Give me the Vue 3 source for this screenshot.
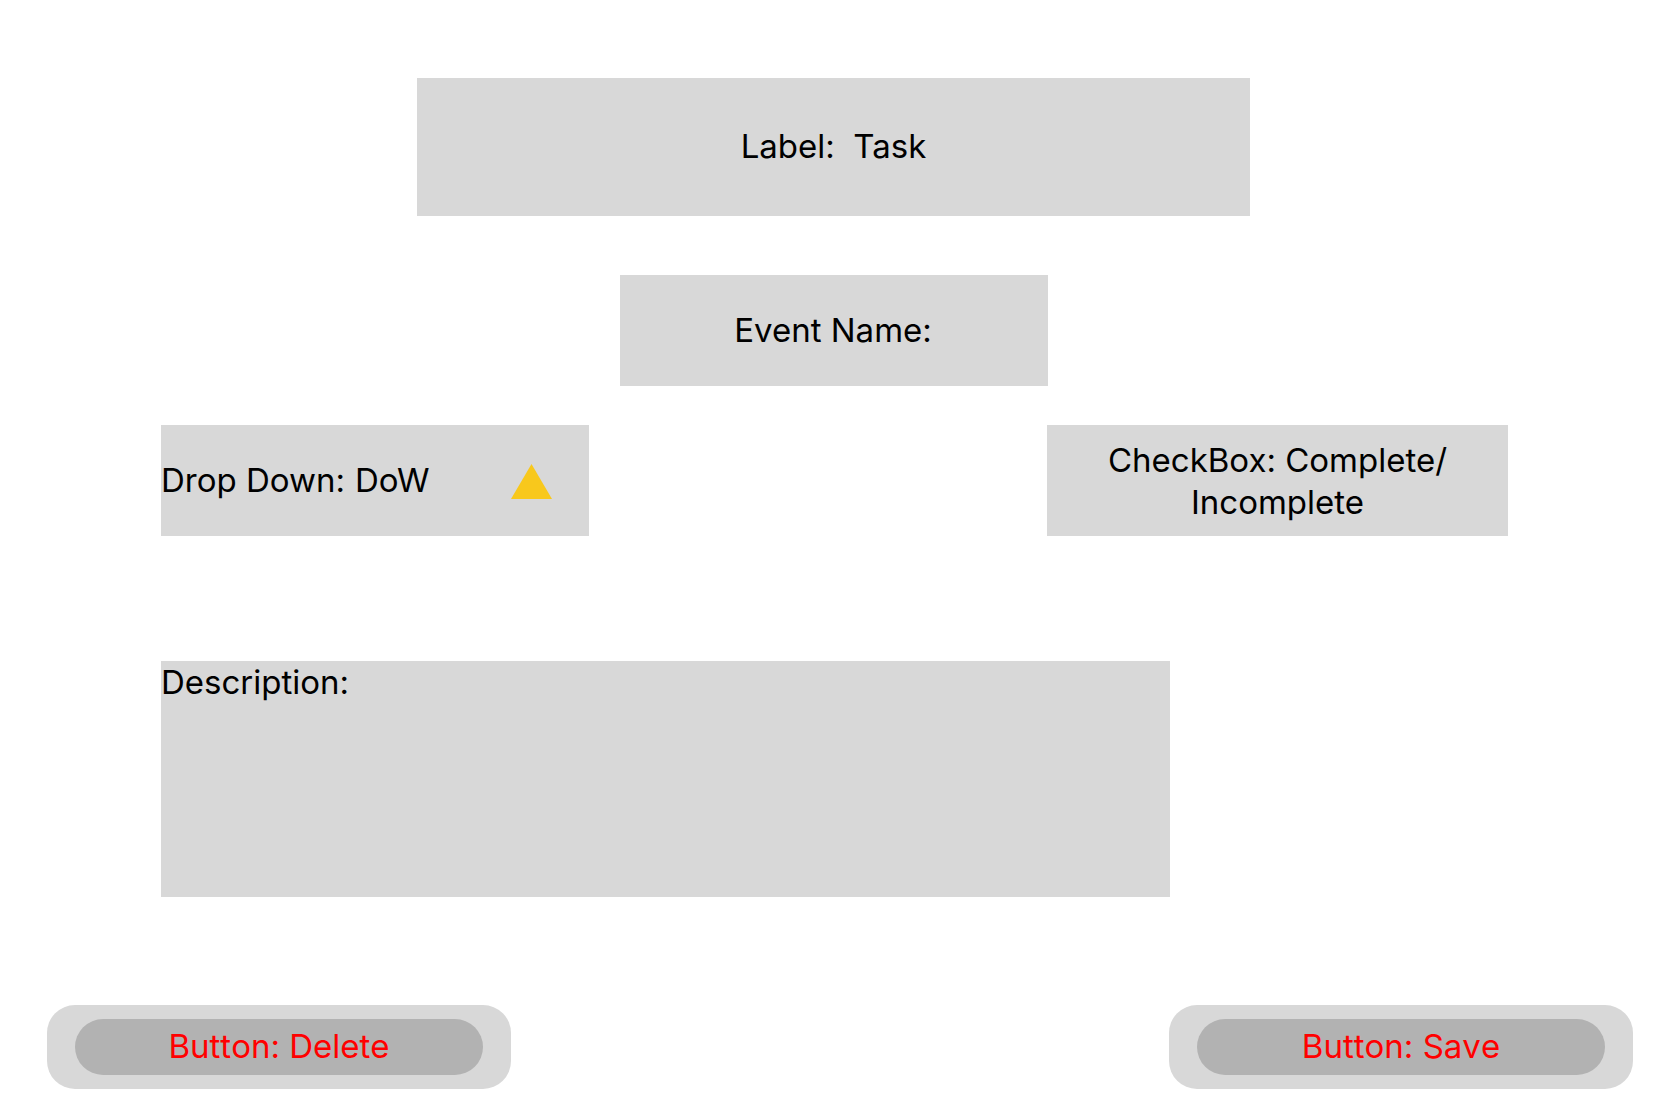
<script setup>
import { ref } from 'vue'

const eventName = ref('')
const day = ref('DoW')
const complete = ref(false)
const description = ref('')
const days = ['DoW', 'Mon', 'Tue', 'Wed', 'Thu', 'Fri', 'Sat', 'Sun']
</script>

<template>
  <form class="page" @submit.prevent>
    <h1 class="panel single title">Label:&nbsp; Task</h1>

    <label class="panel single event">
      <span>Event Name:</span>
      <input v-model="eventName" class="event-input" type="text" />
    </label>

    <div class="options">
      <div class="panel single dropdown">
        <label class="dropdown-label" for="day">Drop Down:</label>
        <select id="day" v-model="day" class="dropdown-select">
          <option v-for="d in days" :key="d" :value="d">{{ d }}</option>
        </select>
        <svg class="arrow" viewBox="0 0 41 38" aria-hidden="true">
          <path d="M20.500 3 41 38H0Z" fill="#f8c81c" />
        </svg>
      </div>
      <label class="panel check">
        <input v-model="complete" class="check-input" type="checkbox" />
        <span>CheckBox: Complete/<br />Incomplete</span>
      </label>
    </div>

    <div class="details">
      <div class="panel description">
        <label for="description">Description:</label>
        <textarea id="description" v-model="description" class="description-input"></textarea>
      </div>
    </div>

    <div class="actions">
      <div class="action">
        <button class="single action-button" type="button">Button: Delete</button>
      </div>
      <div class="action">
        <button class="single action-button" type="submit">Button: Save</button>
      </div>
    </div>
  </form>
</template>

<style>
body {
  margin: 0;
  background: #fff;
}
</style>

<style scoped>
.page {
  display: flex;
  flex-direction: column;
  box-sizing: border-box;
  padding: 78px 0 23px;
  font-family: Inter, "Liberation Sans", sans-serif;
  font-size: 33px;
  line-height: 42px;
  color: #000;
}

.page * {
  box-sizing: border-box;
}

input,
select,
textarea,
button {
  margin: 0;
  border: 0;
  padding: 0;
  background: transparent;
  color: inherit;
  font: inherit;
}

.panel {
  display: flex;
  align-items: center;
  background: #d8d8d8;
}

.single {
  padding-bottom: 2px;
}

.title {
  justify-content: center;
  align-self: center;
  width: 50%;
  min-height: 138px;
  margin: 0;
  font-size: 33px;
  font-weight: 400;
}

.event {
  justify-content: center;
  align-self: center;
  width: 428px;
  min-height: 111px;
  margin-top: 59px;
}

.event-input {
  field-sizing: content;
  max-width: 200px;
  outline: 0;
}

.options {
  display: flex;
  justify-content: space-between;
  margin-top: 39px;
  padding: 0 159px 0 161px;
}

.dropdown {
  width: 428px;
  min-height: 111px;
  padding-right: 37px;
}

.dropdown-label {
  margin-right: 10px;
}

.dropdown-select {
  flex: 1;
  appearance: none;
  height: 42px;
}

.arrow {
  width: 41px;
  height: 38px;
  pointer-events: none;
}

.check {
  position: relative;
  justify-content: center;
  width: 461px;
  min-height: 111px;
  text-align: center;
}

.check-input {
  position: absolute;
  inset: 0;
  width: 100%;
  height: 100%;
  opacity: 0;
}

.details {
  display: grid;
  grid-template-columns: 3fr 1fr;
  margin-top: 125px;
  padding: 0 161px;
}

.description {
  flex-direction: column;
  align-items: stretch;
  min-height: 236px;
}

.description-input {
  flex: 1;
  resize: none;
  outline: 0;
}

.actions {
  display: flex;
  justify-content: space-between;
  margin-top: 108px;
  padding: 0 34px 0 47px;
}

.action {
  width: 464px;
  padding: 14px 28px;
  border-radius: 28px;
  background: #d8d8d8;
}

.action-button {
  width: 100%;
  height: 56px;
  border-radius: 28px;
  background: #b2b2b2;
  color: #f00;
  font-kerning: none;
}
</style>
